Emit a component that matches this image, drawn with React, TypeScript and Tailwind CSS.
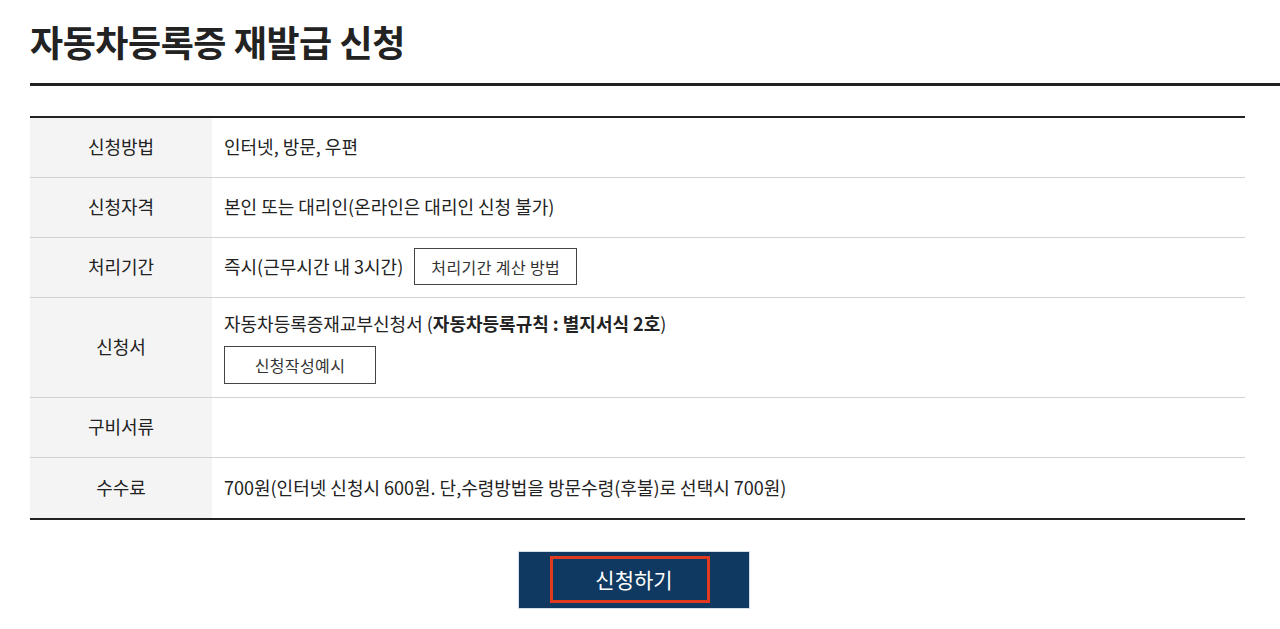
const FONT = "font-['Noto_Sans_CJK_KR','Noto_Sans_KR',sans-serif]";

interface Row {
  label: string;
  height: string;
  content: React.ReactNode;
}

function OutlineButton({ children, className }: { children: React.ReactNode; className: string }) {
  return (
    <button className={`border border-[#444] bg-white text-[16px] text-[#333] tracking-[0.4px] ${className}`}>
      {children}
    </button>
  );
}

export default function App() {
  const rows: Row[] = [
    { label: '신청방법', height: 'h-[60px]', content: <span>인터넷, 방문, 우편</span> },
    { label: '신청자격', height: 'h-[60px]', content: <span>본인 또는 대리인(온라인은 대리인 신청 불가)</span> },
    {
      label: '처리기간',
      height: 'h-[60px]',
      content: (
        <div className="flex items-center gap-[11px]">
          <span>즉시(근무시간 내 3시간)</span>
          <OutlineButton className="w-[163px] h-[37px]">처리기간 계산 방법</OutlineButton>
        </div>
      ),
    },
    {
      label: '신청서',
      height: 'h-[100px]',
      content: (
        <div className="flex flex-col items-start gap-[9px] pt-[1px]">
          <span>
            자동차등록증재교부신청서 (<b className="font-bold">자동차등록규칙 : 별지서식 2호</b>)
          </span>
          <OutlineButton className="w-[152px] h-[38px]">신청작성예시</OutlineButton>
        </div>
      ),
    },
    { label: '구비서류', height: 'h-[60px]', content: null },
    {
      label: '수수료',
      height: 'h-[62px]',
      content: <span>700원(인터넷 신청시 600원. 단,수령방법을 방문수령(후불)로 선택시 700원)</span>,
    },
  ];

  return (
    <div className={`min-h-screen bg-white text-[#222] ${FONT}`}>
      {/* Title */}
      <div className="pl-[30px] pt-[16px]">
        <h1 className="text-[36px] leading-[50px] font-bold tracking-[-0.45px] text-[#222]">
          자동차등록증 재발급 신청
        </h1>
        <div className="mt-[17px] h-[3px] bg-[#222]" />
      </div>

      {/* Info table */}
      <div className="ml-[30px] mt-[30px] w-[1215px] border-t-2 border-[#222]">
        {rows.map((r, i) => (
          <div
            key={r.label}
            className={`grid grid-cols-[182px_1fr] ${r.height} ${
              i === rows.length - 1 ? 'border-b-2 border-[#222]' : 'border-b border-[#d2d2d2]'
            }`}
          >
            <div className="flex items-center justify-center bg-[#f4f4f4] text-[18px] pb-[2px]">
              {r.label}
            </div>
            <div className="flex items-center pl-[12px] text-[18px] pb-[2px]">{r.content}</div>
          </div>
        ))}
      </div>

      {/* Submit */}
      <div className="flex justify-center mt-[31px] pr-[12px]">
        <button className="relative w-[232px] h-[58px] bg-[#0f3961] border border-[#d5dde6] text-white text-[21px]">
          신청하기
          <span className="absolute left-[31px] top-[4px] w-[160px] h-[47px] border-[3px] border-[#e23a1f]" />
        </button>
      </div>
    </div>
  );
}
